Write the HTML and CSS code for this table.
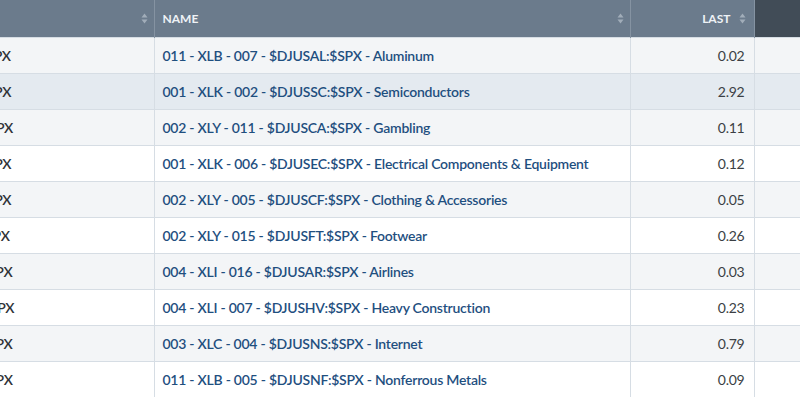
FILE: index.html
```html
<!DOCTYPE html>
<html>
<head>
<meta charset="utf-8">
<link rel="stylesheet" href="styles.css">
</head>
<body>
<div class="viewport">
<table class="grid">
  <colgroup>
    <col class="c-sym">
    <col class="c-name">
    <col class="c-last">
    <col class="c-extra">
  </colgroup>
  <thead>
    <tr>
      <th class="h-sym"><svg class="sort" width="7" height="11" viewBox="0 0 7 11"><path d="M3.5 0.5 L6.5 4.5 L0.5 4.5 Z M0.5 6.5 L6.5 6.5 L3.5 10.5 Z"/></svg></th>
      <th class="h-name">NAME<svg class="sort" width="7" height="11" viewBox="0 0 7 11"><path d="M3.5 0.5 L6.5 4.5 L0.5 4.5 Z M0.5 6.5 L6.5 6.5 L3.5 10.5 Z"/></svg></th>
      <th class="h-last">LAST<svg class="sort" width="7" height="11" viewBox="0 0 7 11"><path d="M3.5 0.5 L6.5 4.5 L0.5 4.5 Z M0.5 6.5 L6.5 6.5 L3.5 10.5 Z"/></svg></th>
      <th class="h-extra"></th>
    </tr>
  </thead>
  <tbody>
    <tr class="odd"><td class="sym">$DJUSAL:$SPX</td><td class="name"><a>011 - XLB - 007 - $DJUSAL:$SPX - Aluminum</a></td><td class="num">0.02</td><td class="extra"></td></tr>
    <tr class="hover"><td class="sym">$DJUSSC:$SPX</td><td class="name"><a>001 - XLK - 002 - $DJUSSC:$SPX - Semiconductors</a></td><td class="num">2.92</td><td class="extra"></td></tr>
    <tr class="odd"><td class="sym">$DJUSCA:$SPX</td><td class="name"><a>002 - XLY - 011 - $DJUSCA:$SPX - Gambling</a></td><td class="num">0.11</td><td class="extra"></td></tr>
    <tr><td class="sym">$DJUSEC:$SPX</td><td class="name"><a>001 - XLK - 006 - $DJUSEC:$SPX - Electrical Components &amp; Equipment</a></td><td class="num">0.12</td><td class="extra"></td></tr>
    <tr class="odd"><td class="sym">$DJUSCF:$SPX</td><td class="name"><a>002 - XLY - 005 - $DJUSCF:$SPX - Clothing &amp; Accessories</a></td><td class="num">0.05</td><td class="extra"></td></tr>
    <tr><td class="sym">$DJUSFT:$SPX</td><td class="name"><a>002 - XLY - 015 - $DJUSFT:$SPX - Footwear</a></td><td class="num">0.26</td><td class="extra"></td></tr>
    <tr class="odd"><td class="sym">$DJUSAR:$SPX</td><td class="name"><a>004 - XLI - 016 - $DJUSAR:$SPX - Airlines</a></td><td class="num">0.03</td><td class="extra"></td></tr>
    <tr><td class="sym">$DJUSHV:$SPX</td><td class="name"><a>004 - XLI - 007 - $DJUSHV:$SPX - Heavy Construction</a></td><td class="num">0.23</td><td class="extra"></td></tr>
    <tr class="odd"><td class="sym">$DJUSNS:$SPX</td><td class="name"><a>003 - XLC - 004 - $DJUSNS:$SPX - Internet</a></td><td class="num">0.79</td><td class="extra"></td></tr>
    <tr><td class="sym">$DJUSNF:$SPX</td><td class="name"><a>011 - XLB - 005 - $DJUSNF:$SPX - Nonferrous Metals</a></td><td class="num">0.09</td><td class="extra"></td></tr>
  </tbody>
</table>
</div>
</body>
</html>
```

FILE: styles.css
```css
html, body {
  margin: 0;
  padding: 0;
  background: #ffffff;
}
.viewport {
  width: 800px;
  height: 400px;
  overflow: hidden;
}
.grid {
  border-collapse: collapse;
  table-layout: fixed;
  width: 890px;
  margin-left: -90px;
  font-family: Lato, "Open Sans", sans-serif;
  font-size: 14px;
  letter-spacing: -0.25px;
}
.c-sym { width: 244px; }
.c-name { width: 476px; }
.c-last { width: 124px; }
.c-extra { width: 46px; }

thead th {
  height: 37px;
  padding: 0 8px;
  background: #6b7b8c;
  color: #eef2f6;
  font-size: 12px;
  font-weight: 700;
  letter-spacing: 0;
  text-align: left;
  border-right: 1px solid #8593a2;
  white-space: nowrap;
  box-sizing: border-box;
}
thead th.h-sym { text-align: right; padding-right: 6px; }
thead th.h-last { text-align: right; padding-right: 8px; }
thead th.h-extra { background: #414c57; border-right: none; }
.h-name { position: relative; }
.h-name .sort { position: absolute; right: 6px; top: 13px; }
.h-last .sort { margin-left: 8px; }

.sort {
  display: inline-block;
  vertical-align: -1px;
  fill: #a1adb9;
}

tbody td {
  height: 36px;
  padding: 0 8px;
  border-top: 1px solid #d6dde4;
  border-right: 1px solid #d6dde4;
  white-space: nowrap;
  overflow: hidden;
  box-sizing: border-box;
  background: #ffffff;
}
tbody tr.odd td { background: #f3f5f7; }
tbody tr.hover td { background: #e4eaf0; }
tbody td.extra { border-right: none; }

td.sym {
  color: #2f3338;
  font-weight: 600;
}
td.name a {
  color: #1f4f7f;
  font-weight: 600;
  text-decoration: none;
}
td.num {
  text-align: right;
  color: #3b3f44;
  padding-right: 9px;
}
```
